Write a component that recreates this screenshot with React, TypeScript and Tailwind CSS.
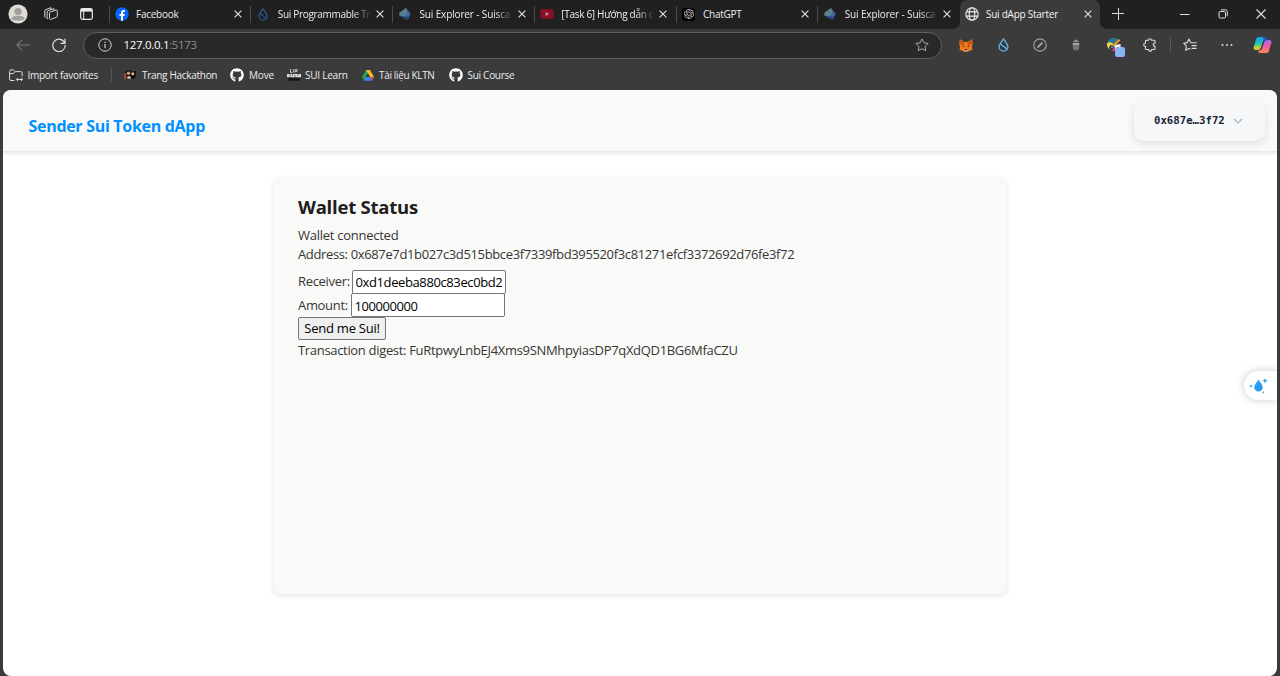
import React from "react";
import { FaGithub } from "react-icons/fa";
import { SiOpenai } from "react-icons/si";

function Cross({ className = "" }: { className?: string }) {
  return (
    <svg viewBox="0 0 8 8" className={`size-2 shrink-0 text-[#e4e4e4] ${className}`} fill="none" stroke="currentColor" strokeWidth="1.1">
      <path d="M.6.6l6.800 6.800M7.400.6L.6 7.400" />
    </svg>
  );
}

function Drop({ className = "", color }: { className?: string; color: string }) {
  return (
    <svg viewBox="0 0 12 16" className={className} fill="none" stroke={color} strokeWidth="1.500" strokeLinejoin="round">
      <path d="M6 1C4.500 3.300 1 6.800 1 10a5 5 0 0010 0C11 6.800 7.500 3.300 6 1z" />
      <path d="M3 6.200c-.3 3.600 7 3.800 6.300 7.200" />
    </svg>
  );
}

function Suiscan() {
  return (
    <svg viewBox="0 0 14 14" className="size-[14px]">
      <path d="M8 1l4.600 5.800-3 6-4.800-2.300z" fill="#41689a" />
      <path d="M8 1L1.500 5.600l-.3 2.900 4.600 1.800L9.500 6z" fill="#5a8190" />
      <path d="M1.200 8.500l4.300 2.700 4.100 1.600 1.300-2.800-4.800-.4z" fill="#27447a" />
    </svg>
  );
}

function Facebook() {
  return (
    <svg viewBox="0 0 14 14" className="size-[14px]">
      <circle cx="7" cy="7" r="6.700" fill="#0866ff" />
      <path d="M6 13.700V9.100H4.500V7H6V6c0-2 .9-3 2.800-3 .4 0 .9.1 1.100.1V5h-.8c-.8 0-1.100.4-1.100 1.100V7h1.800l-.4 2.100H8v4.600z" fill="#fff" />
    </svg>
  );
}

function Youtube() {
  return (
    <svg viewBox="0 0 14 10" className="h-[10px] w-[14px]">
      <rect x=".5" y=".2" width="13" height="9.600" rx="1.500" fill="#8b1028" />
      <path d="M5.700 3.100L9 5 5.700 6.900z" fill="#c99aa5" />
    </svg>
  );
}

function Globe() {
  return (
    <svg viewBox="0 0 14 14" className="size-[14px]" fill="none" stroke="#ededed" strokeWidth="1.100">
      <circle cx="7" cy="7" r="6.200" />
      <ellipse cx="7" cy="7" rx="2.800" ry="6.200" />
      <path d="M1.300 4.900h11.400M1.300 9.100h11.400" />
    </svg>
  );
}

const tabs = [
  { title: "Facebook", icon: <Facebook />, cls: "tracking-[-0.25px]" },
  { title: "Sui Programmable Tr", icon: <Drop color="#27598f" className="h-[13px] w-[10px]" />, fade: true, cls: "tracking-[-0.31px]" },
  { title: "Sui Explorer - Suisca", icon: <Suiscan />, fade: true, cls: "tracking-[-0.14px]" },
  { title: "[Task 6] Hướng dẫn c", icon: <Youtube />, fade: true, cls: "tracking-[-0.3px]" },
  {
    title: "ChatGPT",
    icon: (
      <span className="flex size-[13px] items-center justify-center rounded-[3px] bg-black">
        <SiOpenai className="size-[10px] text-[#c8c8c8]" />
      </span>
    ),
    cls: "tracking-[-0.25px]",
  },
  { title: "Sui Explorer - Suisca", icon: <Suiscan />, fade: true, cls: "tracking-[-0.14px]" },
];

function TabStrip() {
  return (
    <div className="flex h-[29px] bg-[#3b3b3b]">
      <div className="flex h-full w-[960px] items-center rounded-br-[7px] bg-[#202020] pb-px">
        <div className="flex w-[108.500px] shrink-0 items-center">
          <svg viewBox="0 0 20 20" className="ml-2 size-5">
            <circle cx="10" cy="10" r="9.600" fill="#dedbd7" />
            <circle cx="10" cy="7.600" r="3.700" fill="#a39f9b" />
            <path d="M3.500 15c0-2.500 2.500-3 6.500-3s6.500.5 6.500 3c-1.800 2.200-11 2.200-13 0z" fill="#a39f9b" />
          </svg>
          <svg viewBox="0 0 14 14" className="ml-4 size-[14px]" fill="none" stroke="#d5d5d5" strokeWidth="1" strokeLinejoin="round">
            <path d="M5.500 6.200c0-.6.300-1 .8-1.200l5.700-1.900c.8-.2 1.300.1 1.300.9v5c0 .6-.3 1-.8 1.200l-5.200 2c-1.100.4-1.800.1-1.800-.9z" />
            <path d="M3.100 11.200V5c0-.7.300-1.100.9-1.300l6-2M.8 9.700V3.900c0-.7.300-1.100.9-1.300L7 .7M3.100 11.200c0 .5.400.8 1 .9M.8 9.700c0 .4.300.7.800.8M10 1.700v1.700M7 .7v2" />
          </svg>
          <svg viewBox="0 0 13 12" className="ml-[21.500px] h-3 w-[13px]" fill="none" stroke="#e9e9e9">
            <rect x=".7" y=".7" width="11.600" height="10.600" rx="1.800" strokeWidth="1.200" />
            <path d="M1 2.300h11" strokeWidth="2.600" />
            <path d="M3.700 3v8" />
          </svg>
        </div>
        {tabs.map((t, i) => (
          <div key={i} className="flex w-[141.750px] shrink-0 items-center">
            <span className="h-[17px] w-px shrink-0 bg-[#4c4c4c]" />
            <span className="ml-[4px] flex w-4 shrink-0 justify-center">{t.icon}</span>
            <span
              className={`ml-[6.500px] w-[93px] pb-px whitespace-nowrap text-[10px] leading-4 text-[#eeeeee] ${t.cls} ${
                t.fade ? "[mask-image:linear-gradient(to_right,black_80%,transparent_101%)]" : ""
              }`}
            >
              {t.title}
            </span>
            <Cross className="ml-[5px]" />
          </div>
        ))}
      </div>
      <div className="flex flex-1 bg-[#202020]">
        <div className="flex w-[140px] items-center rounded-t-[7px] bg-[#3b3b3b] pb-px pl-[4.500px]">
          <Globe />
          <span className="ml-[7.500px] w-[97.500px] pb-px whitespace-nowrap text-[10px] leading-4 tracking-[-0.25px] text-[#f4f4f4]">Sui dApp Starter</span>
          <Cross />
        </div>
        <div className="flex flex-1 bg-[#3b3b3b]">
          <div className="flex flex-1 items-center rounded-bl-[7px] bg-[#202020] pb-px text-[#e0e0e0]">
            <svg viewBox="0 0 12 12" className="ml-[12px] size-3" stroke="currentColor">
              <path d="M6.500 0v12M0 5.500h12" />
            </svg>
            <svg viewBox="0 0 10 10" className="ml-[56px] size-[10px]" stroke="currentColor">
              <path d="M0 5.500h9.500" />
            </svg>
            <svg viewBox="0 0 10 10" className="ml-[28px] size-[10px]" fill="none" stroke="currentColor">
              <rect x="1" y="2.500" width="6.500" height="6.500" rx="1.200" />
              <path d="M3 .8h4.300c1.300 0 2 .7 2 2v4.500" />
            </svg>
            <svg viewBox="0 0 10 10" className="ml-[28px] size-[10px]" fill="none" stroke="currentColor" strokeWidth="1.100">
              <path d="M.5.5l9 9M9.500.5l-9 9" />
            </svg>
          </div>
        </div>
      </div>
    </div>
  );
}

function Slot({ children }: { children: React.ReactNode }) {
  return <div className="flex w-[36.700px] shrink-0 items-center justify-center">{children}</div>;
}

function Toolbar() {
  return (
    <div className="flex h-[33px] items-center">
      <svg viewBox="0 0 14 12" className="mb-[2px] ml-4 h-3 w-[14px]" fill="none" stroke="#767676" strokeWidth="1.100">
        <path d="M14 6H.8M6.300.6L.8 6l5.500 5.400" />
      </svg>
      <svg viewBox="0 0 14 14" className="mb-px ml-[22px] size-[14px]" fill="none" stroke="#dedede" strokeWidth="1.200">
        <path d="M12.800 5.200A6.200 6.200 0 1013.200 7M13 .8v4.500H8.600" />
      </svg>
      <div className="ml-[17px] flex h-[27px] w-[859px] items-center rounded-full border border-[#606060] bg-[#292929] pb-px">
        <svg viewBox="0 0 14 14" className="ml-[13.500px] size-[14px]" fill="none" stroke="#d2d2d2">
          <circle cx="7" cy="7" r="6.200" />
          <path d="M7 6v4.200M7 3.700v1.300" strokeWidth="1.200" />
        </svg>
        <span className="ml-[12px] pb-px text-[11.500px] leading-4 tracking-[-0.32px] text-white">
          127.0.0.1<span className="text-[#8e8e8e]">:5173</span>
        </span>
        <svg viewBox="0 0 14 14" className="mr-[12px] ml-auto size-[14px]" fill="none" stroke="#a8a8a8" strokeLinejoin="round">
          <path d="M7 .9l1.900 3.900 4.300.6-3.100 3 .7 4.300L7 10.700l-3.800 2 .7-4.300-3.100-3 4.300-.6z" />
        </svg>
      </div>
      <div className="ml-[6px] flex flex-1 items-center pb-px">
        <Slot>
          <svg viewBox="0 0 14 13" className="h-[13px] w-[14px]">
            <path d="M.8.3L5.500 3h3L13.200.3l.4 5-.7 3 .6 2.500-3.200 1.300-1.800.6h-3l-1.800-.6L.5 10.800l.6-2.500-.7-3z" fill="#f07a1c" />
            <path d="M.8.3l5 3.700-.9 2.300-4.200-.8zM13.200.3l-5 3.700.9 2.300 4.200-.8z" fill="#c95818" />
            <path d="M3.600 6.300l2.200 1-1.800.7zM10.400 6.300l-2.200 1 1.800.7z" fill="#5b2d17" />
            <path d="M5 10.300h4l-.5 2.200h-3z" fill="#d9b49c" />
            <path d="M5.700 10h2.600v1.200H5.700z" fill="#402c2c" />
          </svg>
        </Slot>
        <Slot><Drop color="#64b5f3" className="h-[14px] w-[11px]" /></Slot>
        <Slot>
          <svg viewBox="0 0 14 14" className="size-[14px]" fill="none" stroke="#a0a0a0">
            <circle cx="7" cy="7" r="6.200" strokeWidth="1.200" />
            <path d="M4.500 9.500l5-5" strokeWidth="1.800" />
          </svg>
        </Slot>
        <Slot>
          <svg viewBox="0 0 8 12" className="h-3 w-2">
            <path d="M1.300 3.300C1.300 1.400 2.200.8 4 .8s2.700.6 2.700 2.500z" fill="#858585" />
            <path d="M.8 4h6.400v4.500c0 2.200-1.200 3-3.200 3s-3.200-.8-3.200-3z" fill="#747474" />
            <path d="M.8 4h6.400v2H.8z" fill="#a3a3a3" />
          </svg>
        </Slot>
        <Slot>
          <svg viewBox="0 0 20 20" className="mt-[5px] ml-[5px] size-5 shrink-0">
            <path d="M1.500 5A6.500 6.500 0 0113 2.500l-5.500 5z" fill="#257b92" />
            <path d="M.8 5.500c2-2 5.500-1.500 7 1.500L5 11.500C2.300 11 .8 9 .8 5.500z" fill="#f7d34a" />
            <path d="M8 7l6.500-1c.8 4-1.300 7-5 7.500z" fill="#eee" />
            <path d="M7 9.500l5 2c-1.500 1.700-4 2-6 1.200z" fill="#e63d75" />
            <path d="M6.500 8.500L13.700 1.700" stroke="#f39a32" strokeWidth="2" />
            <circle cx="5.500" cy="9.300" r="2.200" fill="#28384d" />
            <circle cx="6" cy="9" r=".8" fill="#d8edf5" />
            <rect x="9" y="9" width="10" height="10" rx="2.500" fill="#8ab4f8" />
          </svg>
        </Slot>
        <Slot>
          <svg viewBox="0 0 14 14" className="ml-px size-[14px]" fill="none" stroke="#dcdcdc" strokeWidth="1.100" strokeLinejoin="round">
            <path d="M3.300 2.300h2.200c-.3-2.100 3.200-2.100 2.900 0h2.800c.5 0 .8.300.8.800v2c-2.300-.5-2.300 3.500 0 3v2.600c0 .5-.3.800-.8.800H8.600c.4 2.200-3.300 2.200-2.900 0H3.300c-.5 0-.8-.3-.8-.8V8.300C.1 8.600.100 5 2.500 5.300V3.100c0-.5.3-.8.8-.8z" />
          </svg>
        </Slot>
        <span className="ml-[2px] h-[14px] w-px shrink-0 bg-[#5a5a5a]" />
        <Slot>
          <svg viewBox="0 0 14 14" className="ml-[2px] size-[14px]" fill="none" stroke="#dcdcdc" strokeWidth="1.100" strokeLinejoin="round">
            <path d="M7.600 4.500L5.900 1 4.300 4.600.6 5.200l2.700 2.700-.7 4.300 3.300-1.800 1.500.8M7.600 4.800h6M8.600 7.600h5M8.600 10.400h5" />
          </svg>
        </Slot>
        <Slot>
          <svg viewBox="0 0 12 4" className="ml-[2px] h-1 w-3" fill="#dedede">
            <circle cx="1.500" cy="2" r="1" /><circle cx="6" cy="2" r="1" /><circle cx="10.500" cy="2" r="1" />
          </svg>
        </Slot>
        <svg viewBox="0 0 20 18" className="ml-[8px] h-[18px] w-[19px] shrink-0">
          <defs>
            <linearGradient id="cl" x1="0" y1="0" x2="0" y2="1">
              <stop offset="0" stopColor="#1b9cf2" /><stop offset=".5" stopColor="#22c3b4" /><stop offset=".8" stopColor="#b6cf3f" /><stop offset="1" stopColor="#f5b52e" />
            </linearGradient>
            <linearGradient id="cr" x1="0" y1="0" x2="0" y2="1">
              <stop offset="0" stopColor="#ad62f0" /><stop offset=".5" stopColor="#f05aa6" /><stop offset="1" stopColor="#ff8a4a" />
            </linearGradient>
          </defs>
          <path d="M6 .5h6.500c1.500 0 1.900 1 2.300 2.500L11 4 8.200 12c-.5 1.500-1.500 2.200-3 2.200H3C.8 14.200.3 12.500.9 10.500l2.300-7.600C3.700 1.300 4.500.5 6 .5z" fill="url(#cl)" />
          <path d="M14 17.500H8c-1.500 0-2.200-.8-2.500-2.500L9 14l2.800-8c.5-1.500 1.500-2.200 3-2.200H17c2.200 0 2.700 1.700 2.100 3.700l-2.300 7.600c-.5 1.600-1.300 2.400-2.800 2.400z" fill="url(#cr)" />
          <path d="M10.500.5h2c1.500 0 1.900 1 2.400 3.300-2 0-2.800 1-3.300 2.500z" fill="#1a55c4" />
        </svg>
      </div>
    </div>
  );
}

function Bookmarks() {
  return (
    <div className="flex h-[28px] items-center pb-[2px] text-[10px] leading-4 whitespace-nowrap text-[#ececec]">
      <svg viewBox="0 0 14 13" className="ml-[9px] h-[13px] w-[14px]" fill="none" stroke="#dadada" strokeLinejoin="round">
        <path d="M5.500 11.500H2c-.9 0-1.400-.5-1.400-1.400V2.300C.6 1.400 1.100.9 2 .9h2.500l1.800 1.700h5.500c.9 0 1.400.5 1.400 1.400v3.500M.6 4.600h3.700l2-2M7.500 10.500h6M9 8.800l-1.700 1.700L9 12.200M12 8.800l1.700 1.700-1.700 1.700" />
      </svg>
      <span className="ml-[4.500px] w-[83px] tracking-[-0.28px]">Import favorites</span>
      <span className="h-[14px] w-px bg-[#555555]" />
      <svg viewBox="0 0 13 12" className="ml-[12px] h-3 w-[13px]">
        <path d="M1 2.500L5 1l3 1.500L12 2v4l-1.500 4L7 9.500 3 8 1 6z" fill="#16110f" />
        <path d="M.3 4l2 .5v5l-2 1z" fill="#a94b32" />
        <circle cx="4.500" cy="4.200" r="1.700" fill="#d59b7b" />
        <circle cx="8.800" cy="4.700" r="1.500" fill="#e0b495" />
        <path d="M3 8l3-1 1 2.500H4z" fill="#e7ded8" />
      </svg>
      <span className="ml-[5.500px] w-[88px] tracking-[-0.3px]">Trang Hackathon</span>
      <FaGithub className="size-[14px] text-white" />
      <span className="ml-[5px] w-[37.500px] tracking-[-0.15px]">Move</span>
      <svg viewBox="0 0 14 12" className="h-3 w-[14px]">
        <path d="M3.500 0v3.500h1.800M6.300 0v3.500M8 3.500V.5h2v2H8" fill="none" stroke="#cfcfcf" strokeWidth=".9" />
        <path d="M0 5h14v3.200H0z" fill="#dcdcdc" />
        <path d="M3 4.500v4M5.500 4.500v2.300M8 6v2.500M11 4.500v2.300" stroke="#3b3b3b" strokeWidth=".7" />
        <path d="M1 9h12v2.800H1z" fill="#1a1a1a" />
      </svg>
      <span className="ml-[4.500px] w-[58px] tracking-[-0.24px]">SUI Learn</span>
      <svg viewBox="0 0 12 11" className="-ml-px h-[11px] w-3">
        <path d="M4 0h4L4 7 2 10.500 0 7z" fill="#20a45a" />
        <path d="M4 0h4l4 7H8z" fill="#fdbb1b" />
        <path d="M4 7h8l-2 3.700H2z" fill="#3f82ed" />
        <path d="M8.500 7H12l-2 3.700z" fill="#e34335" />
        <path d="M4 7L6 3.500 8 7z" fill="#3b3b3b" />
      </svg>
      <span className="ml-[5px] w-[70px] tracking-[-0.34px]">Tài liệu KLTN</span>
      <FaGithub className="size-[14px] text-white" />
      <span className="ml-[4.500px] tracking-[-0.28px]">Sui Course</span>
    </div>
  );
}

function Assistant() {
  return (
    <div className="absolute top-[281px] right-0 flex h-[29px] w-[33px] items-center rounded-l-full bg-white pl-[5px] shadow-[0_0_8px_rgba(0,0,0,0.22)]">
      <svg viewBox="0 0 20 18" className="h-[18px] w-5" fill="#2b9bed">
        <path d="M9.500 2.500c-.8 2-4.200 4.800-4.200 7.900a4.200 4.200 0 008.400 0c0-3.100-3.400-5.900-4.200-7.900z" />
        <path d="M16 1l.8 2 2 .8-2 .8-.8 2-.8-2-2-.8 2-.8zM2 7l.5 1.400L4 9l-1.500.6L2 11l-.5-1.400L0 9l1.500-.6zM14.300 13.800l.4 1.100 1.100.4-1.100.4-.4 1.100-.4-1.100-1.100-.4 1.100-.4z" />
      </svg>
    </div>
  );
}

export default function App() {
  return (
    <div className="flex h-[676px] w-[1280px] flex-col overflow-hidden bg-[#3b3b3b] font-['Open_Sans','Noto_Sans',sans-serif]">
      <TabStrip />
      <Toolbar />
      <Bookmarks />
      <div className="relative mx-[3px] flex flex-1 flex-col overflow-hidden rounded-[8px] bg-white">
        <header className="flex h-[62px] shrink-0 items-start justify-between border-b border-[#e9e9e7] bg-[#f9f9f8] pr-[12px] pl-[25.500px] shadow-[0_1px_4px_rgba(0,0,0,0.13)]">
          <h1 className="pt-[24px] text-[16px] leading-6 font-bold tracking-[-0.3px] text-[#0090ff]">Sender Sui Token dApp</h1>
          <button className="mt-[10px] flex h-[41px] w-[131px] items-center rounded-[10px] bg-[#f6f7f9] pl-[20px] text-[#182435] shadow-[0_3px_10px_rgba(0,0,0,0.10)]">
            <span className="pt-px font-['DejaVu_Sans_Mono',monospace] text-[10.700px] font-bold">0x687e…3f72</span>
            <svg viewBox="0 0 10 6" className="ml-2 h-[6px] w-[10px]" fill="none" stroke="#a0b6c8" strokeWidth="1.200">
              <path d="M1 1l4 4 4-4" />
            </svg>
          </button>
        </header>
        <main className="mx-auto mt-[25px] h-[417px] w-[734px] rounded-[8px] bg-[#f9f9f8] px-[25px] pt-[18px] text-[13px] leading-[19px] tracking-[-0.32px] whitespace-nowrap text-[#373632] shadow-[0_2px_5px_rgba(0,0,0,0.11)]">
          <h2 className="mb-[7px] text-[18.500px] leading-6 font-bold tracking-[-0.23px] text-[#21201c]">Wallet Status</h2>
          <p className="tracking-[-0.26px]">Wallet connected</p>
          <p className="tracking-[-0.36px]">Address: 0x687e7d1b027c3d515bbce3f7339fbd395520f3c81271efcf3372692d76fe3f72</p>
          <div className="mt-[6px] flex h-[23px] items-center">
            <label className="w-[54px]">Receiver:</label>
            <input readOnly value="0xd1deeba880c83ec0bd2" className="h-6 w-[154px] rounded-[2px] border border-[#767676] bg-white px-[2.500px] text-[13px] tracking-[-0.39px] text-black" />
          </div>
          <div className="flex h-[24px] items-center">
            <label className="w-[53px]">Amount:</label>
            <input readOnly value="100000000" className="h-6 w-[154px] rounded-[2px] border border-[#767676] bg-white px-[2.500px] pt-px text-[13px] tracking-[-0.42px] text-black" />
          </div>
          <button className="block h-[23px] w-[88px] rounded-[2px] border border-[#767676] bg-[#efefef] text-[13px] leading-[21px] tracking-[-0.25px] text-black">Send me Sui!</button>
          <p className="pt-px">Transaction digest: FuRtpwyLnbEJ4Xms9SNMhpyiasDP7qXdQD1BG6MfaCZU</p>
        </main>
        <Assistant />
      </div>
    </div>
  );
}
